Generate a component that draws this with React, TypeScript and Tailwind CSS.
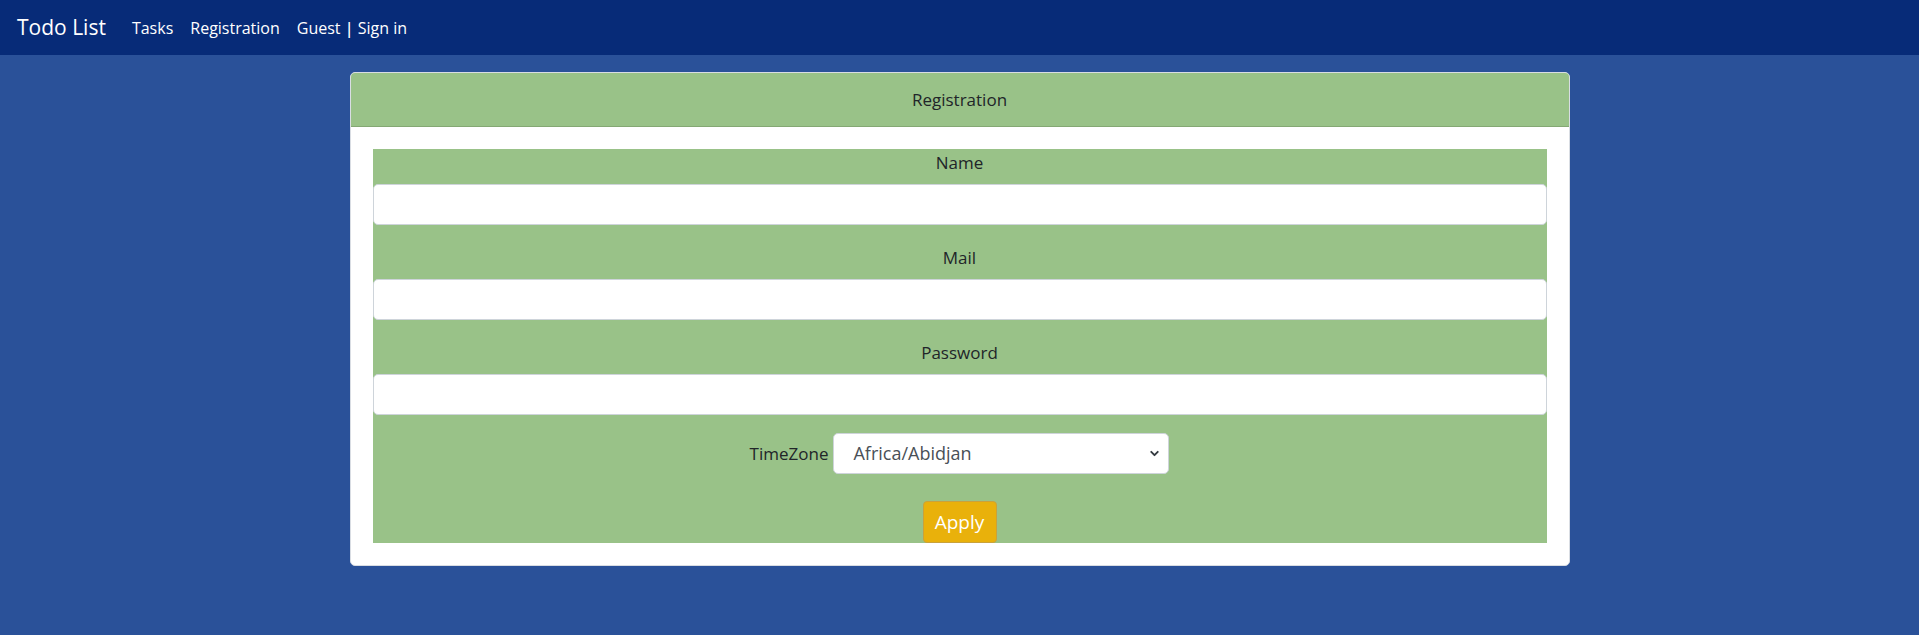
import { ChevronDown } from 'lucide-react'

const fields = [
  { label: 'Name', type: 'text' },
  { label: 'Mail', type: 'email' },
  { label: 'Password', type: 'password' },
]

export default function App() {
  return (
    <div className="min-h-screen bg-[#2a5199] font-['Open_Sans','Noto_Sans',sans-serif] text-[#212529]">
      <nav className="h-[55px] bg-[#072b78] flex items-center px-[17px] text-white">
        <span className="text-[21px] mr-[26px]">Todo List</span>
        <div className="flex items-center gap-[17px] text-[16px]">
          <a href="#">Tasks</a>
          <a href="#">Registration</a>
          <span>
            Guest <span className="font-semibold">|</span> Sign in
          </span>
        </div>
      </nav>
      <main className="pt-[17px]">
        <div className="w-[1220px] mx-auto bg-white border border-[#d9dde3] rounded-[5px] overflow-hidden">
          <div className="h-[54px] bg-[#99c288] border-b border-[#84a874] flex items-center justify-center text-[17px]">
            Registration
          </div>
          <div className="p-[22px]">
            <form className="bg-[#99c288] flex flex-col text-[17px]" onSubmit={(e) => e.preventDefault()}>
              {fields.map((f, i) => (
                <div key={f.label} className={i === 0 ? 'flex flex-col' : 'flex flex-col mt-[19px]'}>
                  <label className="text-center leading-[27px] mb-[8px]">{f.label}</label>
                  <input
                    type={f.type}
                    className="h-[41px] bg-white border border-[#ced4da] rounded-[5px] px-3 outline-none"
                  />
                </div>
              ))}
              <div className="flex items-center justify-center mt-[18px]">
                <span className="mr-[5px]">TimeZone</span>
                <div className="relative">
                  <select className="appearance-none w-[336px] h-[41px] bg-white border border-[#ced4da] rounded-[5px] pl-[19px] pr-8 text-[18px] text-[#495057] outline-none">
                    <option>Africa/Abidjan</option>
                    <option>Africa/Accra</option>
                    <option>Europe/London</option>
                  </select>
                  <ChevronDown
                    className="absolute right-[8px] top-[14px] w-[13px] h-[13px] text-[#343a40] pointer-events-none"
                    strokeWidth={3.5}
                  />
                </div>
              </div>
              <div className="flex justify-center mt-[27px]">
                <button
                  type="submit"
                  className="w-[74px] h-[42px] bg-[#e9b10b] border border-[#c9a23c] rounded-[4px] text-white text-[19px]"
                >
                  Apply
                </button>
              </div>
            </form>
          </div>
        </div>
      </main>
    </div>
  )
}
